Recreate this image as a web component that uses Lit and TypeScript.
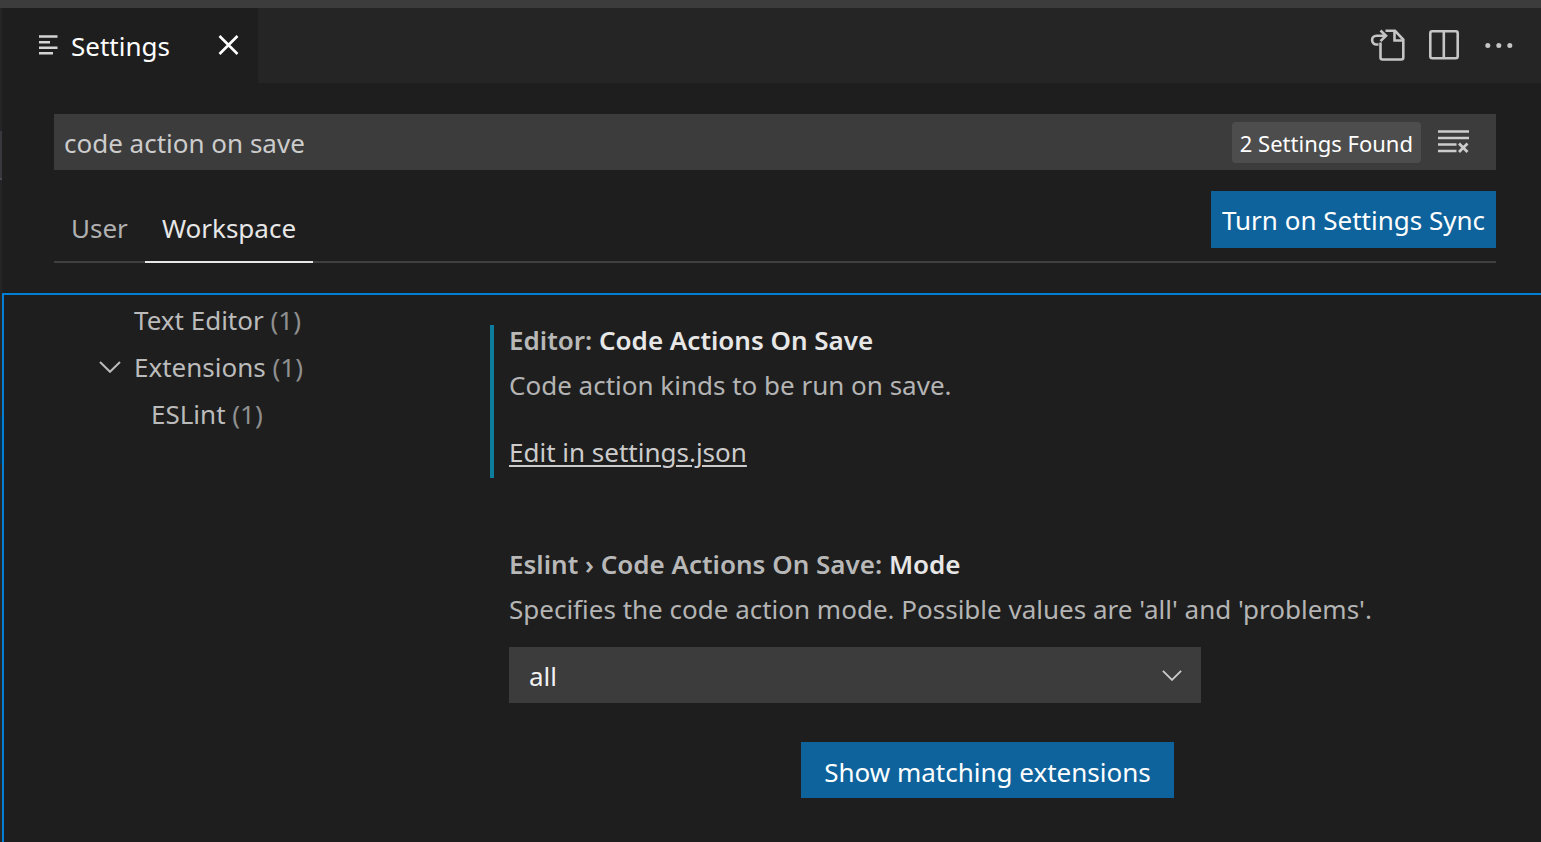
import { LitElement, html, css, svg } from "lit";
import { customElement, property, state } from "lit/decorators.js";

const font = css`"Noto Sans", "Open Sans", sans-serif`;

const base = css`
  *,
  *::before,
  *::after {
    box-sizing: border-box;
  }
  button,
  input,
  select {
    font: inherit;
    color: inherit;
    margin: 0;
    padding: 0;
    border: 0;
    border-radius: 0;
    background: none;
    outline: none;
  }
  svg {
    display: block;
    flex: none;
  }
`;

const chevron = (w: number) => svg`
  <svg class="chevron" width=${w} height=${Math.round(w / 2) + 1} viewBox="0 0 22 12" fill="none" stroke="currentColor" stroke-width="2" aria-hidden="true">
    <path d="M1 1l10 9.800l10-9.800" />
  </svg>`;

@customElement("editor-tabs")
class EditorTabs extends LitElement {
  static styles = [
    base,
    css`
      :host {
        display: flex;
        justify-content: space-between;
        height: 75px;
        background: #252526;
      }
      .tab {
        display: flex;
        align-items: center;
        padding: 0 19px 1px 36px;
        background: #1e1e1e;
        color: #fff;
      }
      .name {
        margin: 0 48px 0 12px;
        line-height: 36px;
        padding-top: 2px;
      }
      .list-icon {
        color: #d4d4d4;
      }
      .actions {
        display: flex;
        align-items: center;
        gap: 22px;
        padding: 0 27px 2px 0;
        color: #c5c5c5;
      }
    `,
  ];

  render() {
    return html`
      <div class="tab">
        <svg class="list-icon" width="21" height="22" viewBox="0 0 21 22" fill="none" stroke="currentColor" stroke-width="2.600" aria-hidden="true">
          <path d="M1 2.500h18.500M1 8.200h11M1 13.700h18.500M1 19.300h14" />
        </svg>
        <span class="name">Settings</span>
        <button aria-label="Close">
          <svg width="21" height="22" viewBox="0 0 21 22" fill="none" stroke="currentColor" stroke-width="2.600">
            <path d="M1.500 2l18 18M19.500 2l-18 18" />
          </svg>
        </button>
      </div>
      <div class="actions">
        <button aria-label="Open Settings (JSON)">
          <svg width="36" height="34" viewBox="0 0 36 34" fill="none" stroke="currentColor" stroke-width="2.600">
            <path d="M15.500 2.800H25L33.300 11.500V29.500q0 2-2 2H12.500q-2 0-2-2V14.500" />
            <path d="M24.500 3.500V12.500H33" />
            <path d="M8.500 16.500H6.500A4.400 4.400 0 0 1 6.500 7.700H16M10.500 2.500l5.500 5.200l-5.500 5.400" />
          </svg>
        </button>
        <button aria-label="Split Editor">
          <svg width="32" height="30" viewBox="0 0 32 30" fill="none" stroke="currentColor" stroke-width="2.600">
            <rect x="2.300" y="1.300" width="27.400" height="27" rx="2" />
            <path d="M15.800 1v27.500" />
          </svg>
        </button>
        <button aria-label="More Actions">
          <svg width="32" height="8" viewBox="0 0 32 8" fill="currentColor">
            <circle cx="5.800" cy="4.500" r="2.500" />
            <circle cx="16.800" cy="4.500" r="2.500" />
            <circle cx="27.800" cy="4.500" r="2.500" />
          </svg>
        </button>
      </div>
    `;
  }
}

@customElement("settings-header")
class SettingsHeader extends LitElement {
  @state() private target = "Workspace";

  static styles = [
    base,
    css`
      :host {
        display: block;
        padding: 31px 45px 30px 52px;
      }
      .search {
        display: flex;
        align-items: center;
        height: 56px;
        padding: 0 26px 0 10px;
        background: #3c3c3c;
        color: #ccc;
      }
      .query {
        flex: 1;
        min-width: 0;
        height: 56px;
        padding-top: 1px;
      }
      .count {
        padding: 2px 8px 0;
        margin-right: 16px;
        border-radius: 4px;
        background: #4d4d4d;
        color: #fff;
        font-size: 22px;
        line-height: 39px;
      }
      .bar {
        display: flex;
        align-items: flex-end;
        justify-content: space-between;
        margin-top: 21px;
        border-bottom: 2px solid #404040;
      }
      .targets {
        display: flex;
        margin-bottom: -2px;
      }
      .target {
        height: 64px;
        padding: 0 17px 4px;
        border-bottom: 2px solid transparent;
        color: #b0b0b0;
      }
      .target.active {
        border-color: #e7e7e7;
        color: #e7e7e7;
      }
      .sync {
        height: 57px;
        margin-bottom: 13px;
        padding: 1px 11px 0;
        background: #0e639c;
        color: #fff;
      }
    `,
  ];

  render() {
    return html`
      <div class="search">
        <input class="query" type="text" aria-label="Search settings" value="code action on save" />
        <span class="count">2 Settings Found</span>
        <button aria-label="Clear Settings Search Input">
          <svg width="33" height="26" viewBox="0 0 33 26" fill="none" stroke="currentColor" stroke-width="2.400">
            <path d="M1 2.500h31M1 9h31M1 15.500h18.500M1 22h18.500" />
            <path d="M22 14.500l8.500 8.500M30.500 14.500l-8.500 8.500" stroke-width="2.800" />
          </svg>
        </button>
      </div>
      <div class="bar">
        <div class="targets">
          ${["User", "Workspace"].map(
            (t) => html`<button
              class="target ${t === this.target ? "active" : ""}"
              @click=${() => (this.target = t)}
            >${t}</button>`
          )}
        </div>
        <button class="sync">Turn on Settings Sync</button>
      </div>
    `;
  }
}

@customElement("settings-toc")
class SettingsToc extends LitElement {
  static styles = [
    base,
    css`
      :host {
        display: block;
        padding-top: 1px;
      }
      .row {
        display: flex;
        align-items: center;
        gap: 13px;
        width: 100%;
        height: 47px;
        padding-left: 130px;
        color: #bbb;
        white-space: nowrap;
      }
      .row.open {
        padding-left: 95px;
      }
      .row.child {
        padding-left: 147px;
      }
      .num {
        color: #8f8f8f;
      }
    `,
  ];

  render() {
    return html`
      <button class="row"><span>Text Editor <span class="num">(1)</span></span></button>
      <button class="row open">${chevron(22)}<span>Extensions <span class="num">(1)</span></span></button>
      <button class="row child"><span>ESLint <span class="num">(1)</span></span></button>
    `;
  }
}

@customElement("setting-item")
class SettingItem extends LitElement {
  @property() category = "";
  @property() label = "";
  @property() description = "";
  @property({ type: Boolean }) modified = false;

  static styles = [
    base,
    css`
      :host {
        display: block;
      }
      .item {
        padding: 0 0 11px 15px;
        border-left: 4px solid transparent;
        line-height: 30px;
      }
      .item.modified {
        border-color: #0c7d9d;
      }
      .title {
        margin: 0 0 15px;
        font-size: 26px;
        font-weight: 600;
        color: #e7e7e7;
      }
      .category {
        color: #b8b8b8;
      }
      .description {
        margin: 0;
        color: #b4b4b4;
      }
    `,
  ];

  render() {
    return html`
      <section class="item ${this.modified ? "modified" : ""}">
        <h3 class="title"><span class="category">${this.category}:</span> ${this.label}</h3>
        <p class="description">${this.description}</p>
        <slot></slot>
      </section>
    `;
  }
}

@customElement("app-root")
class AppRoot extends LitElement {
  static styles = [
    base,
    css`
      :host {
        display: flex;
        flex-direction: column;
        min-height: 100vh;
        border-top: 8px solid #3c3c3c;
        box-sizing: border-box;
        background: #1e1e1e;
        font-family: ${font};
        font-size: 26px;
        overflow: hidden;
      }
      .window {
        flex: 1;
        display: flex;
      }
      .rail {
        width: 2px;
        padding-top: 123px;
        background: #252526;
      }
      .hovered {
        height: 49px;
        background: #37373d;
        border-bottom: 2px solid #4a4a4e;
      }
      .selected {
        height: 48px;
        margin-top: 236px;
        background: #06304c;
      }
      .editor {
        flex: 1;
        min-width: 0;
        display: flex;
        flex-direction: column;
      }
      .body {
        flex: 1;
        display: grid;
        grid-template-columns: 486px 1fr;
        border: 2px solid #007fd4;
        border-width: 2px 0 0 2px;
      }
      .list {
        display: flex;
        flex-direction: column;
        padding: 30px 56px 44px 0;
      }
      .link {
        display: inline-block;
        margin-top: 37px;
        color: #ccc;
        text-decoration-thickness: 2px;
        text-underline-offset: 3px;
      }
      .second {
        margin-top: 71px;
      }
      .picker {
        display: grid;
        align-items: center;
        width: 692px;
        max-width: 100%;
        margin-top: 23px;
        background: #3c3c3c;
        color: #f0f0f0;
      }
      .picker > * {
        grid-area: 1 / 1;
      }
      .select {
        appearance: none;
        width: 100%;
        height: 56px;
        padding: 2px 48px 0 20px;
      }
      .chevron {
        justify-self: end;
        margin-right: 19px;
        color: #ccc;
        pointer-events: none;
      }
      .matching {
        align-self: center;
        height: 56px;
        margin-top: 28px;
        padding: 4px 23px 0;
        background: #0e639c;
        color: #fff;
      }
    `,
  ];

  render() {
    return html`
      <div class="window">
        <div class="rail">
          <div class="hovered"></div>
          <div class="selected"></div>
        </div>
        <div class="editor">
          <editor-tabs></editor-tabs>
          <settings-header></settings-header>
          <div class="body">
            <settings-toc></settings-toc>
            <div class="list">
              <setting-item
                modified
                category="Editor"
                label="Code Actions On Save"
                description="Code action kinds to be run on save."
              >
                <a class="link" href="#settings-json">Edit in settings.json</a>
              </setting-item>
              <setting-item
                class="second"
                category="Eslint › Code Actions On Save"
                label="Mode"
                description="Specifies the code action mode. Possible values are 'all' and 'problems'."
              >
                <div class="picker">
                  <select class="select" aria-label="Code Actions On Save: Mode">
                    <option selected>all</option>
                    <option>problems</option>
                  </select>
                  ${chevron(20)}
                </div>
              </setting-item>
              <button class="matching">Show matching extensions</button>
            </div>
          </div>
        </div>
      </div>
    `;
  }
}
